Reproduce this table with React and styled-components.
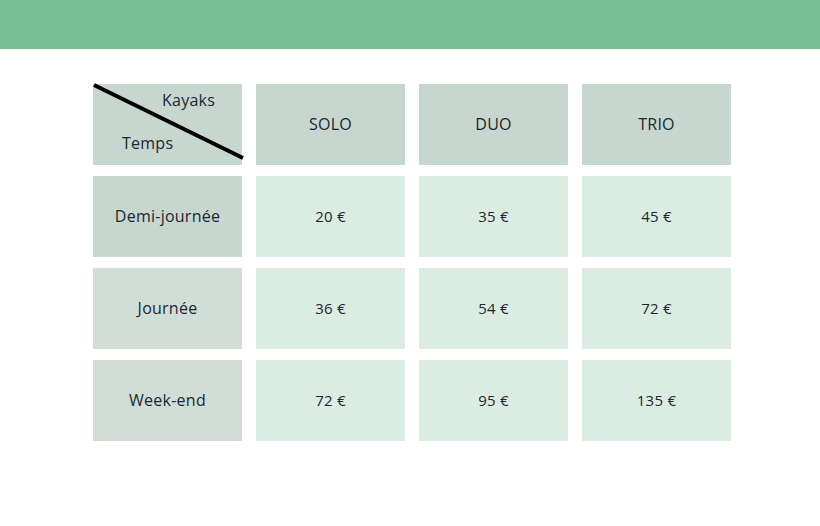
import React from 'react';
import styled, { createGlobalStyle } from 'styled-components';

const GlobalStyle = createGlobalStyle`
  body {
    margin: 0;
    background: #ffffff;
    font-family: "Open Sans", "Noto Sans", sans-serif;
  }
`;

const Header = styled.header`
  height: 49px;
  background-color: #78bf96;
`;

const Table = styled.div`
  display: grid;
  grid-template-columns: repeat(4, 149px);
  grid-auto-rows: 81px;
  column-gap: 14px;
  row-gap: 11px;
  margin: 35px 0 0 93px;
`;

const Cell = styled.div`
  display: flex;
  align-items: center;
  justify-content: center;
  padding-bottom: 2px;
  background-color: ${props => props.bg};
  color: #1b2731;
  font-size: ${props => (props.price ? 15 : 16)}px;
  letter-spacing: 0.25px;
`;

const Corner = styled.div`
  position: relative;
  background-color: #c7d6cf;
  color: #1b2731;
  font-size: 16px;
  letter-spacing: 0.25px;
`;

const CornerLabel = styled.span`
  position: absolute;
  left: ${props => props.left}px;
  top: ${props => props.top}px;
`;

const Diagonal = styled.svg`
  position: absolute;
  left: 0;
  top: 0;
  overflow: visible;
`;

const headBg = '#c7d6cf';
const rowBgs = ['#c7d6cf', '#d1ded7', '#d1ded7'];
const priceBg = '#dbede3';

const kayaks = ['SOLO', 'DUO', 'TRIO'];
const rows = [
  { label: 'Demi-journée', prices: ['20 €', '35 €', '45 €'] },
  { label: 'Journée', prices: ['36 €', '54 €', '72 €'] },
  { label: 'Week-end', prices: ['72 €', '95 €', '135 €'] },
];

const App = () => (
  <>
    <GlobalStyle />
    <Header />
    <Table>
      <Corner>
        <Diagonal width="149" height="81">
          <line x1="1" y1="1" x2="150" y2="74" stroke="#000" strokeWidth="4" />
        </Diagonal>
        <CornerLabel left={69} top={5}>Kayaks</CornerLabel>
        <CornerLabel left={29} top={48}>Temps</CornerLabel>
      </Corner>
      {kayaks.map(k => (
        <Cell key={k} bg={headBg}>{k}</Cell>
      ))}
      {rows.map((r, i) => (
        <React.Fragment key={r.label}>
          <Cell bg={rowBgs[i]}>{r.label}</Cell>
          {r.prices.map((p, j) => (
            <Cell key={j} bg={priceBg} price>{p}</Cell>
          ))}
        </React.Fragment>
      ))}
    </Table>
  </>
);

export default App;
